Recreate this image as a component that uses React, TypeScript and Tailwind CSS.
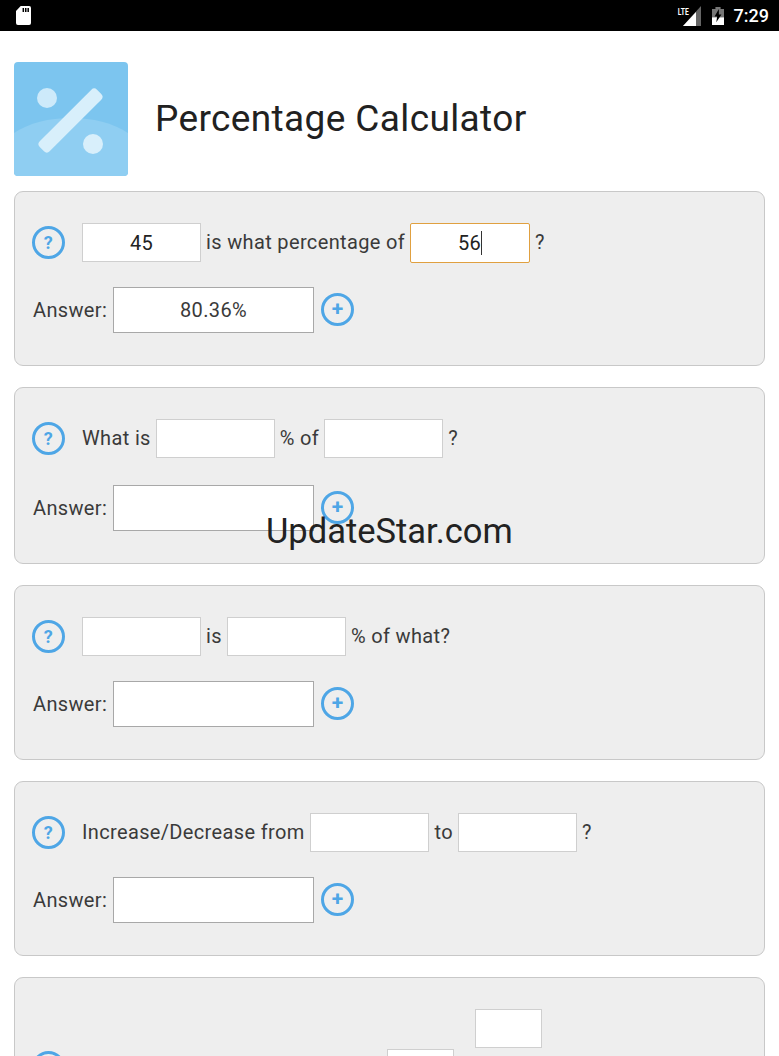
import React from "react";

function HelpIcon() {
  return (
    <div className="w-[33px] h-[33px] rounded-full border-[3px] border-[#4ea6e6] flex items-center justify-center shrink-0 text-[#4ea6e6] text-[18px] font-bold leading-none">
      ?
    </div>
  );
}

function PlusIcon() {
  return (
    <div className="w-[33px] h-[33px] rounded-full border-[3px] border-[#4ea6e6] flex items-center justify-center shrink-0 text-[#4ea6e6] text-[21px] font-bold leading-none">
      +
    </div>
  );
}

function Field({ value, w = "w-[119px]" }: { value?: string; w?: string }) {
  return (
    <div className={`${w} h-[39px] bg-white border border-[#cfcfcf] flex items-center justify-center text-[#222] text-[20px] tracking-[0.35px] shrink-0`}>
      {value}
    </div>
  );
}

function Answer({ value }: { value?: string }) {
  return (
    <div className="flex items-center">
      <span className="text-[20px] tracking-[0.35px] text-[#3a3a3a] w-[98px] pl-[18px] shrink-0">Answer:</span>
      <div className="w-[201px] h-[46px] bg-white border border-[#a8a8a8] flex items-center justify-center text-[#3a3a3a] text-[20px] tracking-[0.35px] shrink-0">
        {value}
      </div>
      <div className="ml-[7px] -mt-[1px]">
        <PlusIcon />
      </div>
    </div>
  );
}

function Card({ children, answer, gap = "gap-[25px]" }: { children: React.ReactNode; answer?: string; gap?: string }) {
  return (
    <section className={`mx-[14px] bg-[#eeeeee] border border-[#c8c8c8] rounded-[9px] pt-[31px] pb-[32px] flex flex-col ${gap}`}>
      <div className="flex items-center pl-[17px] text-[20px] tracking-[0.35px] text-[#3a3a3a]">
        <HelpIcon />
        <div className="ml-[17px] flex items-center gap-[5px] [&>span]:pb-[2px]">{children}</div>
      </div>
      <Answer value={answer} />
    </section>
  );
}

export default function App() {
  return (
    <div className="relative w-[779px] h-[1056px] overflow-hidden bg-white font-['Roboto',sans-serif]">
      <header className="h-[31px] bg-black flex items-center justify-between pl-[16px] pr-[10px]">
        <svg width="15" height="19" viewBox="0 0 16 19" preserveAspectRatio="none">
          <path d="M5 0h9a2 2 0 0 1 2 2v15a2 2 0 0 1-2 2H2a2 2 0 0 1-2-2V5z" fill="#fff" />
          <rect x="7" y="2" width="1.6" height="4" fill="#000" />
          <rect x="9.6" y="2" width="1.6" height="4" fill="#000" />
          <rect x="12.2" y="2" width="1.6" height="4" fill="#000" />
        </svg>
        <div className="flex items-center">
          <div className="relative w-[24px] h-[20px]">
            <svg width="24" height="20" viewBox="0 0 24 20" className="absolute left-[0px] top-[0px]">
              <path d="M21 0v20H3z" fill="#666" />
              <path d="M16 6v14H3z" fill="#fff" />
            </svg>
            <span className="absolute left-[-4px] top-[0px] text-[9px] font-bold text-white leading-[12px] scale-x-75">LTE</span>
          </div>
          <svg width="12" height="18" viewBox="0 0 14 19" className="ml-[8px]" preserveAspectRatio="none">
            <path d="M4 0h6v2h4v17H0V2h4z" fill="#777" />
            <path d="M0 11h14v8H0z" fill="#fff" />
            <path d="M8 2L3 10h3l-1 6 6-8H8z" fill="#000" />
          </svg>
          <span className="ml-[10px] text-[18px] font-medium text-white leading-none">7:29</span>
        </div>
      </header>

      <div className="flex items-center mx-[14px] mt-[31px] mb-[15px]">
        <svg width="114" height="114" viewBox="0 0 114 114" className="shrink-0">
          <rect width="114" height="114" rx="4" fill="#7cc5ef" />
          <path d="M0 71C15 61 35 56 57 56s42 5 57 15v39a4 4 0 0 1-4 4H4a4 4 0 0 1-4-4z" fill="#8fcef2" />
          <circle cx="33" cy="36" r="10" fill="#cdeafa" />
          <circle cx="79" cy="82" r="10" fill="#d8effb" />
          <rect x="49.5" y="18" width="14" height="81" rx="4" transform="rotate(45 56.5 58.5)" fill="#d8effb" />
        </svg>
        <h1 className="ml-[27px] pb-[2px] text-[37px] tracking-[0.38px] font-normal text-[#212121] leading-none">Percentage Calculator</h1>
      </div>

      <div className="flex flex-col gap-[21px]">
        <Card answer="80.36%">
          <Field value="45" />
          <span>is what percentage of</span>
          <div className="w-[120px] h-[40px] -mb-[1px] bg-white border-[1.5px] border-[#e0a040] rounded-[2px] flex items-center justify-center text-[#222] text-[20px] tracking-[0.35px] shrink-0">
            56
            <span className="w-[1px] h-[24px] bg-[#333]" />
          </div>
          <span>?</span>
        </Card>
        <Card gap="gap-[27px]">
          <span>What is</span>
          <Field />
          <span>% of</span>
          <Field />
          <span>?</span>
        </Card>
        <Card>
          <Field />
          <span>is</span>
          <Field />
          <span>% of what?</span>
        </Card>
        <Card>
          <span>Increase/Decrease from</span>
          <Field />
          <span className="pl-[1px]">to</span>
          <Field />
          <span>?</span>
        </Card>
        <section className="mx-[14px] bg-[#eeeeee] border border-[#c8c8c8] rounded-[9px] pt-[31px] pl-[17px] h-[200px] flex items-start">
          <div className="mt-[42px]">
            <HelpIcon />
          </div>
          <div className="ml-[322px] mt-[40px]">
            <Field w="w-[67px]" />
          </div>
          <div className="ml-[21px]">
            <Field w="w-[67px]" />
          </div>
        </section>
      </div>

      <div className="absolute left-[266px] top-[510px] text-[34.5px] text-[#222] leading-[42px] whitespace-nowrap">UpdateStar.com</div>
    </div>
  );
}
